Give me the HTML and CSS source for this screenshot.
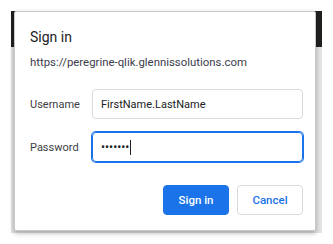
FILE: index.html
```html
<!DOCTYPE html>
<html lang="en">
<head>
    <meta charset="UTF-8">
    <title>Sign in</title>
    <link rel="stylesheet" href="styles.css">
</head>
<body>
    <div class="stage">
        <div class="backdrop">
            <div class="backdrop-bar"></div>
        </div>

        <form class="dialog">
            <h1 class="title">Sign in</h1>
            <p class="origin">https://peregrine-qlik.glennissolutions.com</p>

            <div class="field">
                <label for="username">Username</label>
                <input type="text" id="username" value="FirstName.LastName">
            </div>
            <div class="field">
                <label for="password">Password</label>
                <div class="input focused">
                    <span class="dots">&bull;&bull;&bull;&bull;&bull;&bull;&bull;</span><span class="caret"></span>
                </div>
            </div>

            <div class="actions">
                <button type="button" class="btn btn-primary">Sign in</button>
                <button type="button" class="btn">Cancel</button>
            </div>
        </form>
    </div>
</body>
</html>
```
FILE: styles.css
```css
body {
    margin: 0;
    background: #fff;
    font-family: Roboto, "Noto Sans", sans-serif;
    color: #202124;
}
.stage {
    position: relative;
    width: 333px;
    height: 244px;
    padding: 11px 0 0 11px;
    box-sizing: border-box;
}
.backdrop {
    width: 311px;
    height: 222px;
    background: #e4e4e4;
}
.backdrop-bar {
    height: 36px;
    background: #202020;
}
.dialog {
    position: absolute;
    left: 14px;
    top: 11px;
    width: 302px;
    height: 220px;
    box-sizing: border-box;
    margin: 0;
    padding: 15px 12px 0 15px;
    background: #fff;
    border: 1px solid #c8c8c8;
    border-radius: 2px;
    box-shadow: 0 2px 5px rgba(0, 0, 0, 0.3);
}
.title {
    margin: 0;
    font-size: 14px;
    line-height: 20px;
    font-weight: normal;
    color: #202124;
}
.origin {
    margin: 7px 0 0;
    font-size: 11.4px;
    line-height: 16px;
    color: #3c3c4c;
}
.field {
    display: flex;
    align-items: center;
    margin-top: 19px;
}
.field + .field {
    margin-top: 13px;
}
label {
    width: 62px;
    flex: none;
    font-size: 11px;
    color: #3c4043;
}
input, .input {
    width: 211px;
    height: 30px;
    box-sizing: border-box;
    padding: 0 8px;
    border: 1px solid #dadce0;
    border-radius: 4px;
    font-family: inherit;
    font-size: 11px;
    color: #202124;
    outline: none;
}
.input {
    display: flex;
    align-items: center;
}
.focused {
    border-color: #1a73e8;
    box-shadow: 0 0 0 1px #1a73e8;
}
.dots {
    font-size: 12px;
}
.caret {
    width: 1px;
    height: 15px;
    margin-left: 1px;
    background: #202124;
}
.actions {
    display: flex;
    justify-content: flex-end;
    gap: 8px;
    margin-top: 23px;
}
.btn {
    width: 66px;
    height: 30px;
    border: 1px solid #dadce0;
    border-radius: 4px;
    background: #fff;
    color: #1a73e8;
    font-family: inherit;
    font-size: 11.5px;
    font-weight: 500;
}
.btn-primary {
    background: #1a73e8;
    border-color: #1a73e8;
    color: #fff;
}
```
